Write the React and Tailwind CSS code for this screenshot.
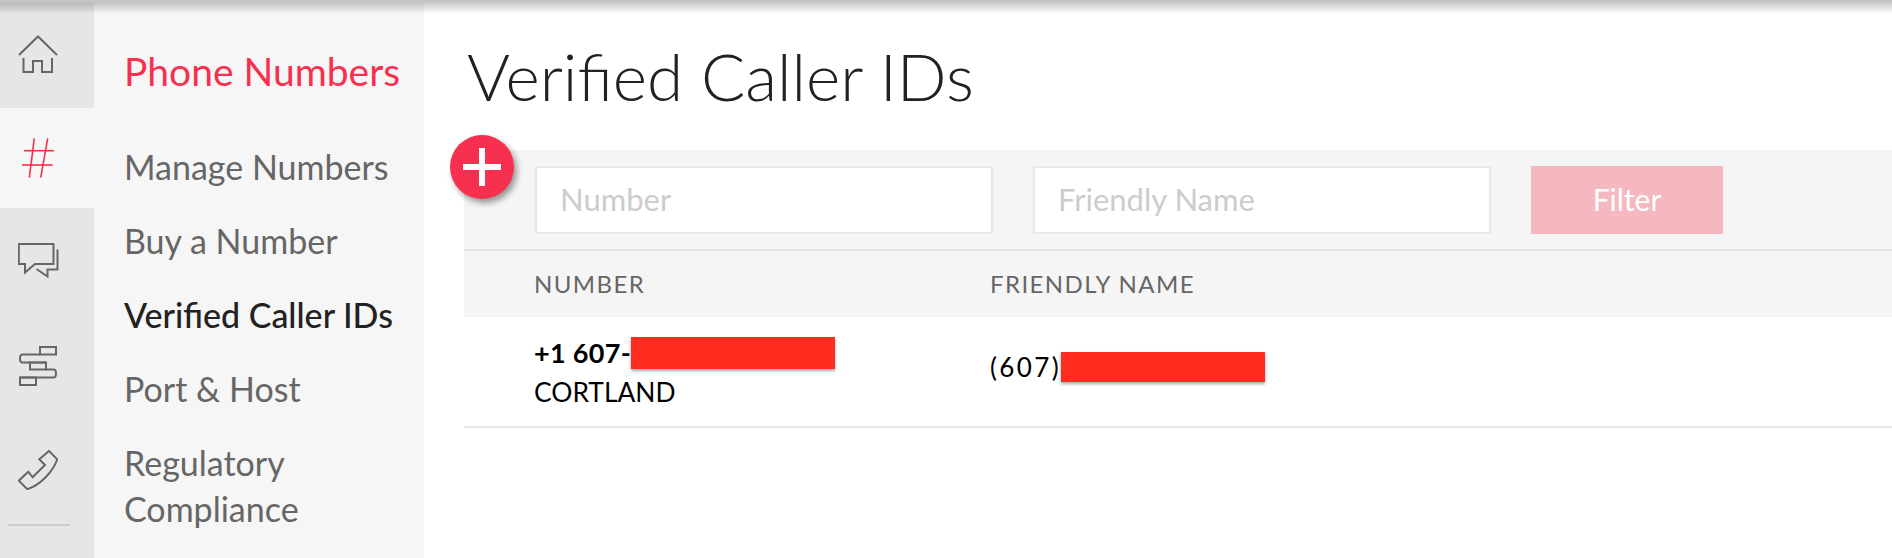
import React from "react";

const font = "font-['Lato','Open_Sans',sans-serif]";

const HomeIcon = () => (
  <svg width="40" height="38" viewBox="0 0 40 38" fill="none" stroke="#666" strokeWidth="2">
    <path d="M1 20 L20 1.5 L39 20" />
    <path d="M5.5 23 V37 H15 V26 H24 V37 H34 V23" />
  </svg>
);

const HashIcon = () => (
  <svg width="33" height="40" viewBox="0 0 33 40" fill="none" stroke="#f6304e" strokeWidth="1.6">
    <path d="M12.3 0.3 L7.3 39.7" />
    <path d="M25.7 0.3 L18.7 39.7" />
    <path d="M2 12.7 H32" />
    <path d="M0 27 H30.7" />
  </svg>
);

const ChatIcon = () => (
  <svg width="41" height="35" viewBox="0 0 41 35" fill="none" stroke="#666" strokeWidth="2">
    <path d="M0.8 1 H35.5 V21 H17 L7 29.5 V21 H0.8 Z" />
    <path d="M39.5 6.5 V26.5 H29.5 V33.5 L18.5 26" />
  </svg>
);

const StackIcon = () => (
  <svg width="38" height="40" viewBox="0 0 38 40" fill="none" stroke="#666" strokeWidth="2">
    <rect x="21" y="1" width="16" height="7.5" />
    <path d="M21 8.5 H3.5 Q1 8.5 1 12.5 Q1 16.5 3.5 16.5 H27" />
    <rect x="11" y="16.5" width="16" height="7" />
    <path d="M27 23.5 H34.5 Q37 23.5 37 27.5 Q37 31.5 34.5 31.5 H1" />
    <rect x="1" y="31.5" width="16" height="7.5" />
  </svg>
);

const PhoneIcon = () => (
  <svg width="40" height="40" viewBox="0 0 40 40" fill="none" stroke="#666" strokeWidth="2">
    <path d="M31 0.9 L39.2 9.3 C35 22 22 35 9.3 39.2 L0.8 30.7 L10.3 21.7 L14.6 27.3 L27 15 L21.3 9.3 Z" />
  </svg>
);

const rail = [
  { id: "home", icon: <HomeIcon />, cls: "h-[104px] pb-[4px]" },
  { id: "numbers", icon: <HashIcon />, cls: "h-[100px] bg-[#f7f7f7]" },
  { id: "chat", icon: <ChatIcon />, cls: "h-[104px]" },
  { id: "stack", icon: <StackIcon />, cls: "h-[108px]" },
  { id: "phone", icon: <PhoneIcon />, cls: "h-[100px]" },
];

const links = ["Manage Numbers", "Buy a Number", "Verified Caller IDs", "Port & Host"];

export default function App() {
  return (
    <div className={`relative flex h-[558px] w-[1892px] overflow-hidden bg-white ${font}`}>
      {/* shadow of the header that sits above this crop */}
      <div className="absolute inset-x-0 top-0 z-10 h-[14px] border-t-[3px] border-[#c4c4c4] bg-gradient-to-b from-black/20 to-transparent" />

      <div className="flex w-[94px] shrink-0 flex-col bg-[#e6e6e6] pt-1">
        {rail.map((item) => (
          <div key={item.id} className={`flex items-center justify-center pr-[18px] ${item.cls}`}>
            {item.icon}
          </div>
        ))}
        <div className="ml-2 mr-6 mt-1 h-[2px] bg-[#cccccc]" />
      </div>

      <div className="w-[330px] shrink-0 bg-[#f6f6f6] pl-[30px]">
        <div className="mt-[47px] text-[39px] leading-[48px] text-[#f6304e]">Phone Numbers</div>
        <div className="mt-[49px] flex flex-col gap-[28px]">
          {links.map((link) => (
            <div
              key={link}
              className={`text-[34px] leading-[46px] ${link === "Verified Caller IDs" ? "font-medium text-[#222222]" : "text-[#666666]"}`}
            >
              {link}
            </div>
          ))}
          <div className="text-[34px] leading-[46px] text-[#666666]">
            Regulatory
            <br />
            Compliance
          </div>
        </div>
      </div>

      <div className="flex-1 pl-[40px]">
        <h1 className="mt-[41px] pl-[3px] text-[65.6px] leading-[70px] font-light text-[#222222]">Verified Caller IDs</h1>

        <div className="relative mt-[39px] bg-[#f5f5f5]">
          <div className="absolute left-[-14px] top-[-15px] flex h-16 w-16 items-center justify-center rounded-full bg-[#f6304e] shadow-[3px_4px_6px_rgba(0,0,0,0.4)]">
            <svg width="38" height="38" viewBox="0 0 38 38" fill="#fff">
              <rect x="16" y="0" width="6" height="38" />
              <rect x="0" y="16" width="38" height="6" />
            </svg>
          </div>
          <div className="flex h-[101px] gap-[40px] border-b-2 border-[#e6e6e6] pl-[71px] pt-[16px]">
            <div className="flex h-[68px] w-[458px] items-center border-2 border-[#e8e8e8] bg-white pb-[2px] pl-[23px] text-[31px] text-[#cccccc]">
              Number
            </div>
            <div className="flex h-[68px] w-[458px] items-center border-2 border-[#e8e8e8] bg-white pb-[2px] pl-[23px] text-[31px] text-[#cccccc]">
              Friendly Name
            </div>
            <div className="flex h-[68px] w-[192px] items-center justify-center bg-[#f5b8c1] pb-[2px] text-[30px] text-white">
              Filter
            </div>
          </div>
          <div className="flex h-[66px] items-center pl-[70px] text-[24px] tracking-[1.4px] text-[#666666]">
            <div className="w-[456px]">NUMBER</div>
            <div>FRIENDLY NAME</div>
          </div>
        </div>

        <div className="flex h-[111px] items-start border-b-2 border-[#e6e6e6] pl-[70px] text-black">
          <div className="w-[456px] pt-[20px]">
            <div className="flex h-[32px] items-center text-[27px] font-bold tracking-[0.3px]">
              +1 607-
              <span className="h-[32px] w-[204px] bg-[#ff2d20] shadow-[0_2px_3px_rgba(0,0,0,0.35)]" />
            </div>
            <div className="mt-[7px] text-[26.4px] leading-[32px]">CORTLAND</div>
          </div>
          <div className="mt-[35px] flex h-[30px] items-center text-[26px] tracking-[2.4px]">
            (607)
            <span className="h-[30px] w-[204px] bg-[#ff2d20] shadow-[0_2px_3px_rgba(0,0,0,0.35)]" />
          </div>
        </div>
      </div>
    </div>
  );
}
